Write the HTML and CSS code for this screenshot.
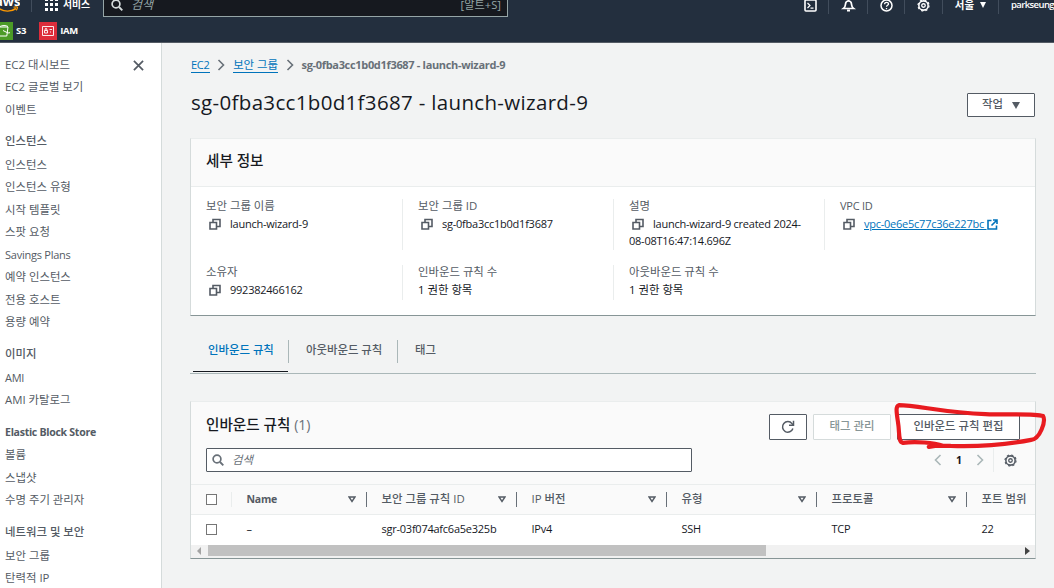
FILE: index.html
```html
<!DOCTYPE html>
<html lang="ko">
<head>
<meta charset="utf-8">
<title>EC2 보안 그룹</title>
<link rel="stylesheet" href="styles.css">
</head>
<body>
<svg class="defs" width="0" height="0">
  <symbol id="copy" viewBox="0 0 12 12"><path d="M1 4.500h6.500V11H1zM4 4.500V1.500h7v7H7.500" fill="none" stroke="#545b64" stroke-width="1.600"/></symbol>
  <symbol id="chev" viewBox="0 0 8 12"><path d="M1.500 1l5 5-5 5" fill="none" stroke="currentColor" stroke-width="1.600"/></symbol>
  <symbol id="gear" viewBox="0 0 14 14"><circle cx="7" cy="7" r="5" fill="none" stroke="currentColor" stroke-width="1.700"/><circle cx="7" cy="7" r="6" fill="none" stroke="currentColor" stroke-width="1.200" stroke-dasharray="2.400 2.312"/><circle cx="7" cy="7" r="1.900" fill="none" stroke="currentColor" stroke-width="1.400"/></symbol>
  <symbol id="search" viewBox="0 0 12 12"><circle cx="5" cy="5" r="3.900" fill="none" stroke="currentColor" stroke-width="1.700"/><path d="M8 8l3.300 3.300" stroke="currentColor" stroke-width="1.900"/></symbol>
  <symbol id="sort" viewBox="0 0 8 7"><path d="M1 1h6L4 5.500z" fill="none" stroke="#545b64" stroke-width="1.400"/></symbol>
</svg>
<header class="header">
  <div class="topbar">
    <svg class="aws" viewBox="0 0 20 18"><text x="-5" y="9" class="aws-text">aws</text><path d="M-2 11c6 4 13 4 18 .5" fill="none" stroke="#f90" stroke-width="1.600"/><path d="M13.500 10.300c2-.7 4-.6 4 0s-.3 2-1.300 3" fill="none" stroke="#f90" stroke-width="1.200"/></svg>
    <i class="sep sep-first"></i>
    <svg class="grid-icon" viewBox="0 0 13 13"><path d="M0 0h3v3H0zM5 0h3v3H5zM10 0h3v3h-3zM0 5h3v3H0zM5 5h3v3H5zM10 5h3v3h-3zM0 10h3v3H0zM5 10h3v3H5zM10 10h3v3h-3z" fill="#fff"/></svg>
    <span class="services">서비스</span>
    <div class="top-search"><svg class="i12"><use href="#search"/></svg><em>검색</em><span class="hint">[알트+S]</span></div>
    <div class="tools">
      <div class="tool w-shell"><svg class="i13" viewBox="0 0 13 13"><rect x="1" y="1" width="11" height="11" rx="1" fill="none" stroke="#fff" stroke-width="1.600"/><path d="M3.500 4L6 6.500 3.500 9M6.500 9.200h3" fill="none" stroke="#fff" stroke-width="1.200"/></svg></div>
      <div class="tool w-bell"><svg class="i13" viewBox="0 0 13 13"><path d="M1.500 9.500c2-1.500 1.800-3 2-4.500C3.700 3 4.800 2 6.500 2s2.800 1 3 3c.2 1.500 0 3 2 4.500z" fill="none" stroke="#fff" stroke-width="1.700"/><path d="M5 11.500h3M6.500 0v2" stroke="#fff" stroke-width="1.900"/></svg></div>
      <div class="tool w-help"><svg class="i13" viewBox="0 0 13 13"><circle cx="6.500" cy="6.500" r="5.500" fill="none" stroke="#fff" stroke-width="1.500"/><path d="M4.600 5.200c0-2.400 3.900-2.300 3.900-.2 0 1.300-2 1.300-2 2.800M6.500 8.900v1.300" fill="none" stroke="#fff" stroke-width="1.300"/></svg></div>
      <div class="tool w-gear"><svg class="i13" viewBox="0 0 14 14"><use href="#gear" width="14" height="14"/></svg></div>
      <div class="tool w-region">서울<b class="tri"></b></div>
      <div class="user">parkseung</div>
    </div>
  </div>
  <div class="favs">
    <svg class="s3" viewBox="0 0 13 18"><rect width="13" height="18" fill="#4b9b27"/><path d="M-3 5h11l-1.200 9H-1zM3 8.500l5 2.500 2-.3M0 4.500c2-1.300 6-1.300 8 0" fill="none" stroke="#fff" stroke-width="1"/></svg>
    <span>S3</span>
    <svg class="iam" viewBox="0 0 18 18"><rect width="18" height="18" fill="#dd2c3b"/><path d="M3.500 4.500h11v9h-11zM5.500 8.500h3v2.500h-3zM6.200 8.500V7c0-1 1.600-1 1.600 0v1.500M10.500 7.500h2.500M11 10h1" fill="none" stroke="#fff" stroke-width=".9"/></svg>
    <span>IAM</span>
  </div>
</header>
<div class="layout">
  <nav class="side">
    <svg class="close" viewBox="0 0 12 12"><path d="M1 1l10 10M11 1L1 11" stroke="#545b64" stroke-width="1.900"/></svg>
    <a>EC2 대시보드</a><a>EC2 글로벌 보기</a><a>이벤트</a>
    <h4>인스턴스</h4>
    <a>인스턴스</a><a>인스턴스 유형</a><a>시작 템플릿</a><a>스팟 요청</a><a class="en">Savings Plans</a><a>예약 인스턴스</a><a>전용 호스트</a><a>용량 예약</a>
    <h4>이미지</h4>
    <a class="en">AMI</a><a>AMI 카탈로그</a>
    <h4 class="en">Elastic Block Store</h4>
    <a>볼륨</a><a>스냅샷</a><a>수명 주기 관리자</a>
    <h4>네트워크 및 보안</h4>
    <a>보안 그룹</a><a>탄력적 IP</a>
  </nav>
  <main class="main">
    <div class="crumbs"><a class="en">EC2</a><svg class="chev"><use href="#chev"/></svg><a>보안 그룹</a><svg class="chev"><use href="#chev"/></svg><b class="en">sg-0fba3cc1b0d1f3687 - launch-wizard-9</b></div>
    <div class="title-row"><h1>sg-0fba3cc1b0d1f3687 - launch-wizard-9</h1><button class="btn action">작업<b class="tri"></b></button></div>
    <section class="panel details">
      <h2>세부 정보</h2>
      <div class="facts">
        <div class="fact"><label>보안 그룹 이름</label><p class="en"><svg class="copy"><use href="#copy"/></svg>launch-wizard-9</p></div>
        <div class="fact"><label>보안 그룹 ID</label><p class="en"><svg class="copy"><use href="#copy"/></svg>sg-0fba3cc1b0d1f3687</p></div>
        <div class="fact"><label>설명</label><p class="en"><svg class="copy"><use href="#copy"/></svg>launch-wizard-9 created 2024-<br>08-08T16:47:14.696Z</p></div>
        <div class="fact"><label class="en">VPC ID</label><p class="en"><svg class="copy"><use href="#copy"/></svg><a class="link">vpc-0e6e5c77c36e227bc <svg class="ext" viewBox="0 0 11 11"><path d="M4.500 1.500H1v8.500h8.500V6.500M6 1h4v4M10 1L4.500 6.500" fill="none" stroke="#0073bb" stroke-width="1.600"/></svg></a></p></div>
        <div class="fact"><label>소유자</label><p class="en"><svg class="copy"><use href="#copy"/></svg>992382466162</p></div>
        <div class="fact"><label>인바운드 규칙 수</label><p>1 권한 항목</p></div>
        <div class="fact"><label>아웃바운드 규칙 수</label><p>1 권한 항목</p></div>
      </div>
    </section>
    <div class="tabs"><div class="tab active"><span>인바운드 규칙</span></div><div class="tab"><span>아웃바운드 규칙</span></div><div class="tab"><span>태그</span></div></div>
    <section class="panel rules">
      <div class="rules-head">
        <h2>인바운드 규칙 <span>(1)</span></h2>
        <button class="btn refresh"><svg class="i14" viewBox="0 0 14 14"><path d="M11.900 8.500A5.300 5.300 0 1 1 11 3.600l1.300 1.600" fill="none" stroke="#545b64" stroke-width="1.500"/><path d="M12.500 .8v4.500H8" fill="none" stroke="#545b64" stroke-width="1.500"/></svg></button>
        <button class="btn disabled">태그 관리</button>
        <button class="btn edit">인바운드 규칙 편집</button>
      </div>
      <div class="filter">
        <div class="search"><svg class="i12"><use href="#search"/></svg><em>검색</em></div>
        <div class="pager"><svg class="chev prev"><use href="#chev"/></svg><b>1</b><svg class="chev"><use href="#chev"/></svg><i></i><svg class="i14" viewBox="0 0 14 14"><use href="#gear" width="14" height="14"/></svg></div>
      </div>
      <div class="row thead">
        <div class="check"><span class="box"></span></div>
        <div class="cell en name">Name<svg class="sort"><use href="#sort"/></svg></div>
        <div class="cell">보안 그룹 규칙 ID<svg class="sort"><use href="#sort"/></svg></div>
        <div class="cell">IP 버전<svg class="sort"><use href="#sort"/></svg></div>
        <div class="cell">유형<svg class="sort"><use href="#sort"/></svg></div>
        <div class="cell">프로토콜<svg class="sort"><use href="#sort"/></svg></div>
        <div class="cell last">포트 범위</div>
      </div>
      <div class="row en">
        <div class="check"><span class="box"></span></div>
        <div class="cell dash">–</div><div class="cell">sgr-03f074afc6a5e325b</div><div class="cell">IPv4</div><div class="cell">SSH</div><div class="cell">TCP</div><div class="cell last">22</div>
      </div>
      <div class="scroll"><i class="left"></i><div class="thumb"></div><i class="right"></i></div>
    </section>
  </main>
</div>
<svg class="scribble" viewBox="0 0 164 52"><path d="M12 43C7 42 9 34 7 22C5 9 5 6 8 5C26 5 55 13 95 14C120 15 145 13 153 16C156 21 150 39 141 40C120 44 90 47 60 46Q47 45 38 47M12 43C25 41 43 43 53 46" fill="none" stroke="#e81b20" stroke-width="4.200" stroke-linecap="round" stroke-linejoin="round"/></svg>
</body>
</html>
```
FILE: styles.css
```css
* { box-sizing: border-box; }
body { margin: 0; width: 1054px; height: 588px; overflow: hidden; background: #f2f3f3; color: #16191f; font: 11.4px/16px "Open Sans", "Noto Sans CJK KR", sans-serif; }
svg { flex: none; overflow: visible; }
.defs { position: absolute; }
h1, h2, h4, p { margin: 0; }
.en { font-size: 11px; letter-spacing: -0.24px; }
.i12 { width: 12px; height: 12px; }
.i13 { width: 13px; height: 13px; }
.i14 { width: 14px; height: 14px; }
.tri { display: inline-block; border: 4px solid transparent; border-top: 7px solid currentColor; border-bottom: 0; }

.header { height: 43px; background: #232f3e; border-bottom: 1px solid #545b64; color: #fff; overflow: hidden; }
.topbar { display: flex; align-items: center; height: 34px; margin-top: -12px; }
.aws { width: 20px; height: 18px; margin-top: 1px; overflow: hidden; }
.aws-text { font: bold 13px "Open Sans", sans-serif; fill: #fff; }
.sep { flex: none; width: 1px; height: 20px; margin-left: 11px; margin-top: -6px; background: #414d5c; }
.grid-icon { width: 13px; height: 13px; margin: -1px 5px 0 13px; }
.services { flex: none; width: 40px; font-size: 9.800px; font-weight: 600; }
.top-search { flex: none; display: flex; align-items: center; width: 405px; height: 30px; margin-top: -6px; padding: 5px 6px 0 7px; background: #16191f; border: 1px solid #95a5a6; color: #95a5a6; }
.top-search .i12 { color: #d5dbdb; }
.top-search em { margin-left: 8px; font-size: 12px; }
.hint { margin-left: auto; font-size: 11.200px; }
.tools { flex: none; display: flex; align-items: center; margin-left: 284px; height: 20px; }
.tool { display: flex; align-items: center; justify-content: center; height: 17px; border-right: 1px solid #414d5c; font-size: 10.500px; font-weight: 600; }
.w-shell { width: 37px; } .w-bell { width: 39px; } .w-help { width: 37px; } .w-gear { width: 38px; } .w-region { width: 56px; }
.w-region .tri { margin-left: 6px; border-width: 6px 3.500px 0; }
.user { margin-left: 12px; font-size: 9.500px; font-weight: 600; letter-spacing: -.6px; }
.favs { display: flex; align-items: center; height: 18px; font-size: 9.500px; font-weight: 700; letter-spacing: -.25px; }
.s3 { width: 13px; height: 18px; margin-right: 3px; overflow: hidden; }
.iam { width: 18px; height: 18px; margin: 0 3px 0 13px; }

.layout { display: flex; height: 545px; }
.side { flex: none; width: 162px; padding: 10.500px 0 0 5px; background: #fff; border-right: 1px solid #d5dbdb; color: #545b64; }
.side a { display: block; height: 22.500px; line-height: 22px; }
.side h4 { height: 22.500px; margin: 9.200px 0 1.100px; font-size: 11.400px; font-weight: 500; line-height: 22px; }
.side h4.en { font-size: 10.600px; font-weight: 700; letter-spacing: -.3px; }
.close { float: right; width: 11px; height: 11px; margin: 6.500px 17px 0 0; }

.main { flex: none; width: 846px; margin-left: 28px; }
.crumbs { display: flex; align-items: center; height: 16px; margin-top: 14px; padding-left: 1px; color: #687078; }
.crumbs a { color: #0073bb; line-height: 15px; border-bottom: 1px solid #0073bb; }
.crumbs b { letter-spacing: -.32px; }
.chev { width: 8px; height: 12px; margin: 0 8px 0 7.500px; }
.title-row { display: flex; justify-content: space-between; height: 65px; padding: 20px 1px 0; }
h1 { margin-top: -5px; font-size: 20.500px; font-weight: 400; line-height: 28px; letter-spacing: .33px; white-space: nowrap; }
.btn { display: flex; align-items: center; justify-content: center; height: 26px; padding: 0 0 5px; background: #fff; border: 1px solid #545b64; border-radius: 1px; color: #545b64; font: 500 11.400px "Open Sans", "Noto Sans CJK KR", sans-serif; }
.action { width: 68px; height: 24px; padding-bottom: 4px; }
.action .tri { margin: 4px 0 0 9px; }

.panel { background: #fff; border: 1px solid #d5dbdb; border-top-color: #eaeded; border-bottom-color: #879596; }
h2 { font-size: 14.600px; font-weight: 500; }
.details { height: 178px; }
.details h2 { height: 48px; padding: 13px 15px; background: #fafafa; border-bottom: 1px solid #eaeded; }
.facts { display: grid; grid-template-columns: 212px 211px 211px 1fr; grid-template-rows: 51px 35px; row-gap: 15px; padding-top: 12px; }
.fact { padding-left: 15px; border-right: 1px solid #eaeded; }
.fact:nth-child(4), .fact:nth-child(7) { border: 0; }
.fact label { display: block; height: 16px; line-height: 14px; color: #545b64; }
.fact p { line-height: 17px; white-space: nowrap; }
.copy { width: 12px; height: 12px; margin: 0 9px -2px 3px; }
.link { color: #0073bb; text-decoration: underline; }
.ext { width: 11px; height: 11px; vertical-align: -2px; }

.tabs { display: flex; height: 34px; margin-top: 24px; border-bottom: 1px solid #aab7b8; color: #545b64; font-weight: 500; white-space: nowrap; }
.tab { height: 23px; padding: 2px 15px 0 17px; border-right: 1px solid #aab7b8; }
.tab.active { width: 99px; padding-left: 18px; color: #0073bb; }
.tab.active span { display: block; width: 95px; height: 30px; margin-left: -15px; padding-left: 15px; border-bottom: 1px solid #16191f; }
.tab:nth-child(2) { width: 109px; }
.tab:last-child { border: 0; }

.rules { height: 158px; margin-top: 27px; overflow: hidden; background: #fafafa; }
.rules-head { display: flex; gap: 6px; height: 46px; padding: 12px 15px 0; }
.rules-head h2 { margin: 1px auto 0 0; line-height: 18px; }
.rules-head h2 span { color: #687078; font-size: 14px; font-weight: 400; }
.refresh { width: 38px; padding: 0 0 1px; }
.disabled { width: 78px; border-color: #d5dbdb; color: #879596; }
.edit { width: 123px; }
.filter { display: flex; justify-content: space-between; height: 36px; padding: 0 19px 0 15px; }
.search { display: flex; align-items: center; width: 486px; height: 24px; padding-left: 5px; background: #fff; border: 1px solid #545b64; border-radius: 1px; color: #687078; }
.search em { margin-left: 8px; }
.pager { display: flex; align-items: center; height: 24px; color: #aab7b8; }
.pager .chev { margin: 0; }
.pager .prev { transform: scaleX(-1); }
.pager b { margin: 0 14px; color: #16191f; font-size: 10.500px; }
.pager i { width: 1px; height: 24px; margin: 0 10px 0 9px; background: #eaeded; }
.pager .i14 { width: 13px; height: 13px; margin-right: -1px; color: #545b64; }
.row { display: flex; align-items: center; height: 30px; padding-bottom: 2px; background: #fff; }
.thead { height: 31px; padding-bottom: 1px; background: #fafafa; border-top: 1px solid #eaeded; border-bottom: 1px solid #eaeded; color: #545b64; font-weight: 500; }
.thead .name { font-size: 10.500px; font-weight: 700; }
.check { flex: none; width: 41px; height: 15px; padding: 2px 0 0 15px; }
.thead .check { border-right: 1px solid #eaeded; }
.box { display: block; width: 11px; height: 11px; border: 1px solid #767676; background: #fff; }
.cell { flex: none; display: flex; align-items: center; width: 150px; height: 15px; padding: 0 10px 0 14.500px; }
.cell:nth-child(2) { width: 135px; }
.thead .cell { border-right: 1px solid #687078; white-space: nowrap; }
.thead .cell.last { width: 68px; border: 0; }
.sort { width: 8px; height: 7px; margin-left: auto; }
.scroll { display: flex; align-items: center; height: 13px; padding: 0 5px 2px 6px; background: #f1f1f1; }
.scroll .left { border: 4px solid transparent; border-right: 4px solid #a3a3a3; border-left: 0; }
.thumb { width: 558px; height: 11px; margin-left: 7px; background: #c1c1c1; }
.scroll .right { margin-left: auto; border: 4px solid transparent; border-left: 5px solid #444; border-right: 0; }
.scribble { position: absolute; left: 891px; top: 400px; width: 163px; height: 52px; pointer-events: none; }
```
